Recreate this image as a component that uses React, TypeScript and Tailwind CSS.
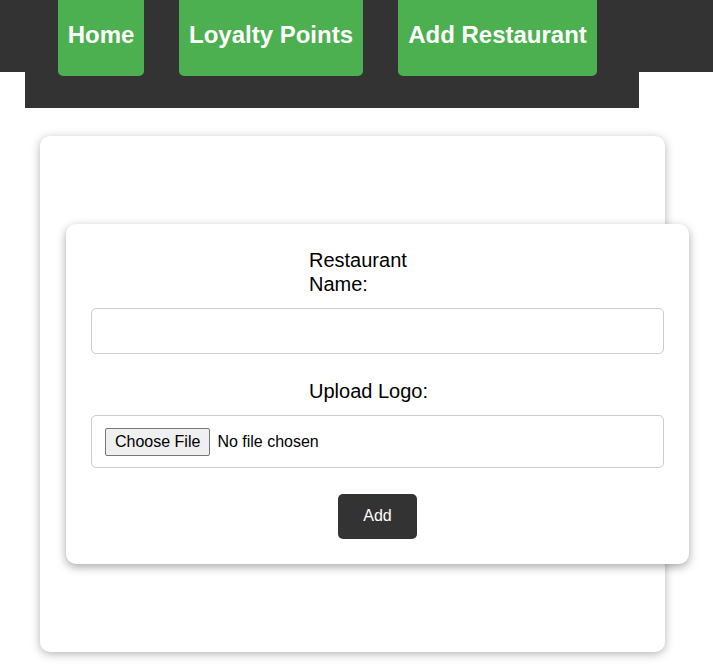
import { useState } from "react";

const navLinks = [
  { label: "Home", width: "w-[86px]" },
  { label: "Loyalty Points", width: "w-[184px]" },
  { label: "Add Restaurant", width: "w-[199px]" },
];

export default function App() {
  const [name, setName] = useState("");

  return (
    <div className="min-h-screen bg-white font-['Liberation_Sans',Arial,sans-serif] text-black">
      {/* Header */}
      <header className="h-[72px] w-full bg-[#333]">
        <nav className="ml-[25px] flex h-[108px] w-[614px] gap-[35px] bg-[#333] pl-[33px]">
          {navLinks.map((link) => (
            <a
              key={link.label}
              href="#"
              className={`${link.width} h-[76px] rounded-b-[5px] bg-[#4CAF50] pt-[21px] text-center text-[24px] font-bold leading-[27px] whitespace-nowrap text-white`}
            >
              {link.label}
            </a>
          ))}
        </nav>
      </header>

      {/* Outer card */}
      <div className="ml-[40px] mt-[64px] w-[625px] rounded-[10px] bg-white pb-[88px] pt-[88px] pl-[26px] shadow-[0_2px_10px_rgba(0,0,0,0.3)]">
        <form
          onSubmit={(e) => e.preventDefault()}
          className="flex h-[340px] w-[623px] flex-col rounded-[10px] bg-white px-[25px] pt-[24px] pb-[25px] shadow-[0_3px_10px_rgba(0,0,0,0.35)]"
        >
          <label className="mx-auto block w-[137px] text-left text-[20px] leading-[24px]">
            Restaurant Name:
          </label>
          <input
            type="text"
            value={name}
            onChange={(e) => setName(e.target.value)}
            className="mt-[12px] h-[46px] w-full rounded-[5px] border border-[#ccc] px-[12px] text-[16px] outline-none"
          />

          <label className="mx-auto mt-[25px] block w-[137px] text-left text-[20px] leading-[24px]">
            Upload Logo:
          </label>
          <input
            type="file"
            className="mt-[12px] h-[53px] w-full rounded-[5px] border border-[#ccc] px-[13px] py-[12px] text-[16px] file:mr-[7px] file:rounded-[2px] file:border file:border-[#767676] file:bg-[#efefef] file:px-[9px] file:py-[1px] file:text-[16px] file:text-black"
          />

          <button
            type="submit"
            className="mx-auto mt-[26px] h-[45px] w-[79px] rounded-[5px] bg-[#333] pb-[2px] text-[16px] text-white"
          >
            Add
          </button>
        </form>
      </div>
    </div>
  );
}
